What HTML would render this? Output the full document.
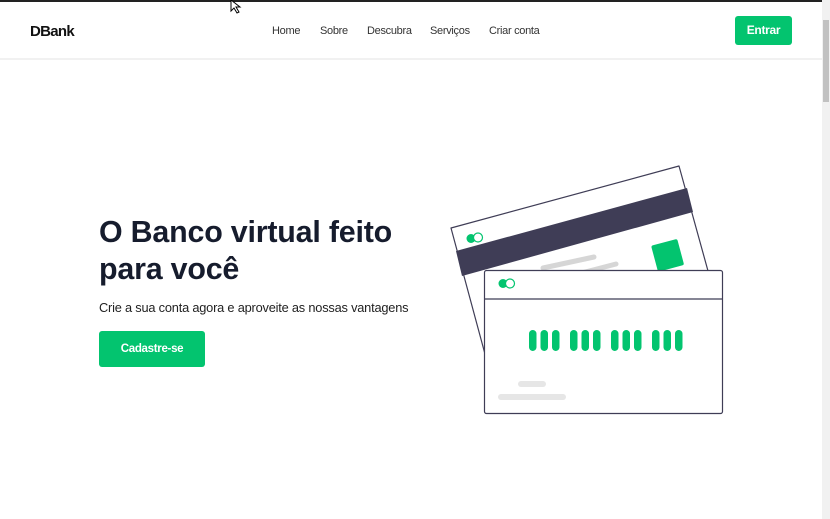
<!DOCTYPE html>
<html><head><meta charset="utf-8"><style>
*{margin:0;padding:0;box-sizing:border-box}
body{width:830px;height:519px;overflow:hidden;background:#fff;font-family:"Liberation Sans",sans-serif;position:relative}
.top{position:absolute;left:0;top:0;width:830px;height:2px;background:#222}
.nav{position:absolute;left:0;top:2px;width:822px;height:58px;background:#fff;border-bottom:2px solid #f1f1f1}
.logo{position:absolute;left:30px;top:21px;font-weight:bold;font-size:15px;color:#111;letter-spacing:-0.7px}
.links{position:absolute;top:23px;font-size:11px;color:#333;letter-spacing:-0.3px}
.links span{position:absolute;white-space:nowrap}
.btn{position:absolute;background:#03c46f;color:#fff;font-weight:bold;border-radius:3px;text-align:center}
.sb{position:absolute;right:0;top:0;width:8px;height:519px;background:#f1f1f1}
.sb div{position:absolute;left:1px;top:20px;width:6px;height:82px;background:#c1c1c1}
h1{position:absolute;left:99px;top:214px;font-size:30.4px;line-height:37px;color:#161c2d;font-weight:bold;letter-spacing:-0.2px}
.sub{position:absolute;left:99px;top:300px;font-size:12.8px;color:#222;letter-spacing:-0.2px}
</style></head><body>
<div class="top"></div>
<div class="nav">
<div class="logo">DBank</div>
<div class="links">
<span style="left:272px">Home</span><span style="left:320px">Sobre</span><span style="left:367px">Descubra</span><span style="left:430px">Serviços</span><span style="left:489px">Criar conta</span>
</div>
<div class="btn" style="left:735px;top:14px;width:57px;height:29px;line-height:29px;font-size:12px;letter-spacing:-0.3px">Entrar</div>
</div>
<div class="sb"><div></div></div>
<h1>O Banco virtual feito<br>para você</h1>
<div class="sub">Crie a sua conta agora e aproveite as nossas vantagens</div>
<div class="btn" style="left:99px;top:331px;width:106px;height:36px;line-height:36px;font-size:11.5px;letter-spacing:-0.3px">Cadastre-se</div>
<svg width="830" height="519" style="position:absolute;left:0;top:0">
<polygon points="451,228 679,166 721,318 492,380" fill="#fff" stroke="#3f3d56" stroke-width="1.2" stroke-linejoin="round"/>
<polygon points="456,251 687,188 693,212 462,276" fill="#3f3d56"/>
<g transform="rotate(-15 667 255)"><rect x="654" y="242" width="27" height="27" rx="2" fill="#03c46f"/></g>
<line x1="543" y1="268" x2="594" y2="257" stroke="#d6d6d6" stroke-width="5" stroke-linecap="round"/>
<line x1="570" y1="276" x2="616" y2="264" stroke="#d6d6d6" stroke-width="5" stroke-linecap="round"/>
<circle cx="471" cy="238.5" r="4.5" fill="#03c46f"/><circle cx="478" cy="237.5" r="4.5" fill="#fff" stroke="#03c46f" stroke-width="1.2"/>
<rect x="484.5" y="270.5" width="238" height="143" rx="2" fill="#fff" stroke="#3f3d56" stroke-width="1.2"/>
<line x1="485" y1="299" x2="722" y2="299" stroke="#3f3d56" stroke-width="1.2"/>
<circle cx="503" cy="283.5" r="4.5" fill="#03c46f"/><circle cx="510" cy="283.5" r="4.5" fill="#fff" stroke="#03c46f" stroke-width="1.2"/>
<g fill="#03c46f">
<rect x="529" y="330" width="7.5" height="21" rx="3.7"/><rect x="540.5" y="330" width="7.5" height="21" rx="3.7"/><rect x="552" y="330" width="7.5" height="21" rx="3.7"/>
<rect x="570" y="330" width="7.5" height="21" rx="3.7"/><rect x="581.5" y="330" width="7.5" height="21" rx="3.7"/><rect x="593" y="330" width="7.5" height="21" rx="3.7"/>
<rect x="611" y="330" width="7.5" height="21" rx="3.7"/><rect x="622.5" y="330" width="7.5" height="21" rx="3.7"/><rect x="634" y="330" width="7.5" height="21" rx="3.7"/>
<rect x="652" y="330" width="7.5" height="21" rx="3.7"/><rect x="663.5" y="330" width="7.5" height="21" rx="3.7"/><rect x="675" y="330" width="7.5" height="21" rx="3.7"/>
</g>
<rect x="518" y="381" width="28" height="6" rx="3" fill="#e6e6e6"/>
<rect x="498" y="394" width="68" height="6" rx="3" fill="#e6e6e6"/>
<path d="M231 0 L231 11 L234 8 L237 13 L239 12 L236 7 L240 7 Z" fill="#fff" stroke="#000" stroke-width="1"/>
</svg>
</body></html>
